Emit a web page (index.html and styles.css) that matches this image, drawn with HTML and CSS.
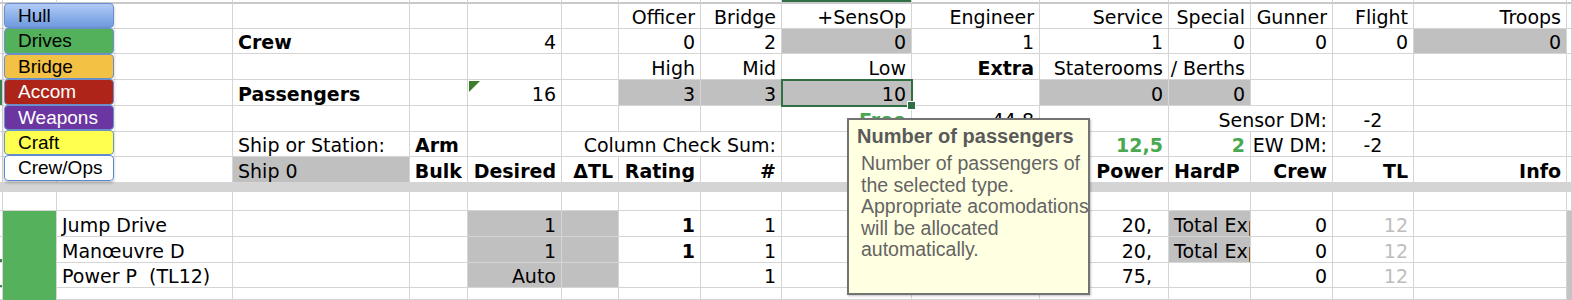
FILE: index.html
```html
<!doctype html>
<html>

<head>
    <meta charset="utf-8">
    <link rel="stylesheet" href="styles.css">
</head>

<body>
    <div class="page">
        <div class="sheet">
            <!-- frozen edge, column I header is selected -->
            <div class="t"></div><div class="t"></div><div class="t"></div><div class="t"></div><div class="t"></div><div class="t"></div><div class="t"></div><div class="t"></div><div class="t"></div>
            <div class="t colsel"></div>
            <div class="t"></div><div class="t"></div><div class="t"></div><div class="t"></div><div class="t"></div><div class="t"></div><div class="t"></div>

            <!-- crew titles -->
            <div class="z"></div><div></div><div></div><div></div><div></div><div></div><div></div>
            <div class="r">Officer</div><div class="r">Bridge</div><div class="r">+SensOp</div><div class="r">Engineer</div>
            <div class="r">Service</div><div class="r">Special</div><div class="r">Gunner</div><div class="r">Flight</div>
            <div class="r">Troops</div><div class="p"></div>

            <!-- crew -->
            <div class="z"></div><div></div><div></div><div class="b">Crew</div><div></div><div class="r">4</div><div></div>
            <div class="r">0</div><div class="r">2</div><div class="r g">0</div><div class="r">1</div>
            <div class="r">1</div><div class="r">0</div><div class="r">0</div><div class="r">0</div>
            <div class="r g">0</div><div class="p"></div>

            <!-- passenger titles -->
            <div class="z"></div><div></div><div></div><div></div><div></div><div></div><div></div>
            <div class="r">High</div><div class="r">Mid</div><div class="r">Low</div><div class="r b">Extra</div>
            <div class="r">Staterooms</div><div class="r"> / Berths</div><div></div><div></div>
            <div></div><div class="p"></div>

            <!-- passengers -->
            <div class="z tick"></div><div></div><div></div><div class="b">Passengers</div><div></div><div class="r note">16</div><div></div>
            <div class="r g">3</div><div class="r g">3</div><div class="r g sel">10</div><div></div>
            <div class="r g">0</div><div class="r g">0</div><div></div><div></div>
            <div></div><div class="p"></div>

            <!-- free space, sensors -->
            <div class="z"></div><div></div><div></div><div></div><div></div><div></div><div></div>
            <div></div><div></div><div class="r ok">Free</div><div class="r">44,8</div>
            <div></div><div class="r span2">Sensor DM:</div><div class="m">-2</div>
            <div></div><div class="p"></div>

            <!-- ship type -->
            <div class="z"></div><div></div><div></div><div>Ship or Station:</div><div class="b">Arm</div><div></div>
            <div class="r span3">Column Check Sum:</div><div></div><div></div>
            <div class="r ok">12,5</div><div class="r ok">2</div><div class="r">EW DM:</div><div class="m">-2</div>
            <div></div><div class="p"></div>

            <!-- component headings -->
            <div class="z"></div><div></div><div></div><div class="g">Ship 0</div><div class="r b">Bulk</div><div class="r b">Desired</div><div class="r b">ΔTL</div>
            <div class="r b">Rating</div><div class="r b">#</div><div></div><div></div>
            <div class="r b">Power</div><div class="b">HardP</div><div class="r b">Crew</div><div class="r b">TL</div>
            <div class="r b">Info</div><div class="p"></div>

            <div class="band"></div>

            <div class="z"></div><div></div><div></div><div></div><div></div><div></div><div></div><div></div>
            <div></div><div></div><div></div><div></div><div></div><div></div><div></div><div></div><div class="p"></div>

            <!-- drives -->
            <div class="z"></div><div class="drives"></div><div>Jump Drive</div><div></div><div></div><div class="r g">1</div><div class="g"></div>
            <div class="r b">1</div><div class="r">1</div><div></div><div></div>
            <div class="r pr">20,</div><div class="g">Total Exp</div><div class="r">0</div><div class="r dim">12</div>
            <div></div><div class="side"></div>

            <div class="z tick-b"></div><div>Manœuvre D</div><div></div><div></div><div class="r g">1</div><div class="g"></div>
            <div class="r b">1</div><div class="r">1</div><div></div><div></div>
            <div class="r pr">20,</div><div class="g">Total Exp</div><div class="r">0</div><div class="r dim">12</div>
            <div></div>

            <div class="z tick-b"></div><div>Power P&nbsp; (TL12)</div><div></div><div></div><div class="r g">Auto</div><div class="g"></div>
            <div></div><div class="r">1</div><div></div><div></div>
            <div class="r pr">75,</div><div></div><div class="r">0</div><div class="r dim">12</div>
            <div></div>

            <div class="z"></div><div></div><div></div><div></div><div></div><div></div><div></div><div></div>
            <div></div><div></div><div></div><div></div><div></div><div></div><div></div>
        </div>

        <div class="shapes">
            <div class="btn hull">Hull</div>
            <div class="btn drv">Drives</div>
            <div class="btn brg">Bridge</div>
            <div class="btn acc">Accom</div>
            <div class="btn wpn">Weapons</div>
            <div class="btn crf">Craft</div>
            <div class="btn ops">Crew/Ops</div>
        </div>

        <div class="tip">
            <h4>Number of passengers</h4>
            <p>Number of passengers of<br>the selected type.<br>Appropriate acomodations<br>will be allocated<br>automatically.</p>
        </div>
    </div>
</body>

</html>
```

FILE: styles.css
```css
body,
html {
    margin: 0;
    padding: 0;
    background: #fff;
    font-family: "DejaVu Sans", sans-serif;
    font-size: 19px;
    color: #000;
}

.page {
    position: relative;
    width: 1572px;
    height: 300px;
    overflow: hidden;
}

.sheet {
    display: grid;
    grid-template-columns: 3px 54px 176px 177px 58px 94px 57px 82px 81px 130px 128px 129px 82px 82px 81px 153px 5px;
    grid-template-rows: 4px 25px 25px 26px 26px 26px 25px 26px 9px 19px 26px 26px 25px 12px;
}

.sheet > div {
    box-sizing: border-box;
    min-width: 0;
    padding: 0 5px;
    border-right: 1px solid #d5d5d5;
    border-bottom: 1px solid #d5d5d5;
    display: flex;
    align-items: flex-end;
    line-height: 22px;
    white-space: nowrap;
    overflow: hidden;
}

.sheet > .t {
    padding: 0;
    border-bottom: 2px solid #c9c9c9;
}

.sheet > .colsel {
    background: #2e7043;
}

.sheet > .z,
.sheet > .p {
    padding: 0;
}

.sheet > .tick {
    background: #3f7f4e;
}

.sheet > .tick-b {
    background: linear-gradient(to bottom, transparent 22px, #3f7f4e 22px);
}

.r {
    justify-content: flex-end;
}

.m {
    justify-content: center;
}

.b {
    font-weight: bold;
}

.sheet > .g {
    background: #c0c0c0;
}

.ok {
    color: #4aa852;
    font-weight: bold;
}

.dim {
    color: #bdbdbd;
}

.sheet > .pr {
    padding-right: 16px;
}

.span2 {
    grid-column: span 2;
}

.span3 {
    grid-column: span 3;
}

.sheet > .band {
    grid-column: 1 / -1;
    background: #d4d4d4;
    border: none;
}

.sheet > .drives {
    grid-row: span 4;
    background: #55b15c;
    border-bottom: none;
}

.sheet > .side {
    grid-row: span 4;
    padding: 0;
    background: #c4c4c4;
    border: none;
}

/* selected cell with its fill handle */
.sheet > .sel {
    position: relative;
    z-index: 1;
    overflow: visible;
    outline: 2px solid #2e7043;
    outline-offset: -1px;
}

.sel::after {
    content: "";
    position: absolute;
    right: -5px;
    bottom: -5px;
    width: 7px;
    height: 7px;
    background: #2e7043;
    border: 1px solid #fff;
}

/* error marker triangle */
.note {
    position: relative;
}

.note::before {
    content: "";
    position: absolute;
    top: 1px;
    left: 1px;
    border-top: 11px solid #3c7d2b;
    border-right: 11px solid transparent;
}

.shapes {
    position: absolute;
    top: 3px;
    left: 4px;
    width: 110px;
    display: flex;
    flex-direction: column;
    font-family: "Liberation Sans", Arial, sans-serif;
    font-size: 19px;
    border-radius: 4px;
    box-shadow: 0 2px 3px rgba(0, 0, 0, 0.25);
}

.btn {
    box-sizing: border-box;
    height: 25.4px;
    line-height: 23px;
    padding-left: 13px;
    border: 1px solid #6a8fcb;
    border-radius: 4px;
    color: #000;
}

.hull {
    background: linear-gradient(to bottom, #b1cbf7, #6e9ade);
}

.drv {
    background: #53b05b;
}

.brg {
    background: #f3c143;
}

.acc {
    background: #ae2418;
    color: #fff;
}

.wpn {
    background: #6b36a1;
    color: #fff;
}

.crf {
    background: #ffff50;
}

.ops {
    background: #fff;
    border-color: #5a87d0;
}

.tip {
    position: absolute;
    left: 847px;
    top: 118px;
    width: 243px;
    height: 177px;
    box-sizing: border-box;
    padding: 5px 8px;
    background: #ffffe1;
    border: 2px solid #737373;
    box-shadow: 1px 1px 2px rgba(0, 0, 0, 0.25);
    font-family: "Liberation Sans", Arial, sans-serif;
    color: #646464;
    white-space: nowrap;
    z-index: 2;
}

.tip h4 {
    margin: 0;
    font-size: 20px;
    line-height: 22px;
    color: #5a5a5a;
}

.tip p {
    margin: 6px 0 0 4px;
    font-size: 19.5px;
    line-height: 21.5px;
}
```
